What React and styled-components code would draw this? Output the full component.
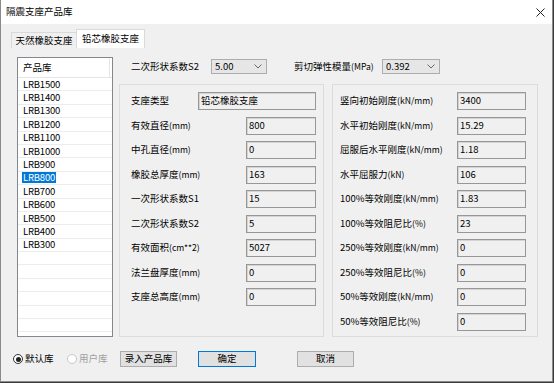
import React from 'react'
import styled, { createGlobalStyle } from 'styled-components'

const products = ['LRB1500', 'LRB1400', 'LRB1300', 'LRB1200', 'LRB1100', 'LRB1000', 'LRB900', 'LRB800', 'LRB700', 'LRB600', 'LRB500', 'LRB400', 'LRB300']

const leftFields = [
  ['有效直径(mm)', '800'],
  ['中孔直径(mm)', '0'],
  ['橡胶总厚度(mm)', '163'],
  ['一次形状系数S1', '15'],
  ['二次形状系数S2', '5'],
  ['有效面积(cm**2)', '5027'],
  ['法兰盘厚度(mm)', '0'],
  ['支座总高度(mm)', '0'],
]

const rightFields = [
  ['竖向初始刚度(kN/mm)', '3400'],
  ['水平初始刚度(kN/mm)', '15.29'],
  ['屈服后水平刚度(kN/mm)', '1.18'],
  ['水平屈服力(kN)', '106'],
  ['100%等效刚度(kN/mm)', '1.83'],
  ['100%等效阻尼比(%)', '23'],
  ['250%等效刚度(kN/mm)', '0'],
  ['250%等效阻尼比(%)', '0'],
  ['50%等效刚度(kN/mm)', '0'],
  ['50%等效阻尼比(%)', '0'],
]

const Chevron = () => (
  <svg width="8" height="5" viewBox="0 0 8 5">
    <polyline points="0.5,0.5 4,4 7.5,0.5" fill="none" stroke="#6a6a6a" strokeWidth="1" />
  </svg>
)

// split "label(unit)" so the unit can be drawn a little narrower
const Label = ({ text }) => {
  const i = text.indexOf('(')
  if (i < 0) return <span>{text}</span>
  return (
    <span>
      {text.slice(0, i)}
      <Unit>{text.slice(i)}</Unit>
    </span>
  )
}

const App = () => {
  const emptyRows = Array.from({ length: 7 })

  return (
    <>
      <GlobalStyle />
      <Window>
        <TitleBar>
          <span>隔震支座产品库</span>
          <svg width="9" height="9" viewBox="0 0 9 9">
            <path d="M0.5 0.5 L8.5 8.5 M8.5 0.5 L0.5 8.5" stroke="#222" strokeWidth="1" />
          </svg>
        </TitleBar>

        <TabStrip>
          <Tab width={65}>天然橡胶支座</Tab>
          <Tab width={69} active>铅芯橡胶支座</Tab>
        </TabStrip>

        <Page>
          <ProductList>
            <ListHeader>
              <HeaderCell>产品库</HeaderCell>
            </ListHeader>
            {products.map((p) => (
              <ListRow key={p}>
                <ItemText selected={p === 'LRB800'}>{p}</ItemText>
              </ListRow>
            ))}
            {emptyRows.map((_, i) => (
              <ListRow key={'e' + i} />
            ))}
          </ProductList>

          <RightColumn>
            <TopRow>
              <ComboLabel width={80}>二次形状系数S2</ComboLabel>
              <Combo width={56}>
                <span>5.00</span>
                <Chevron />
              </Combo>
              <ComboLabel width={88} gap={27}>
                <Label text="剪切弹性模量(MPa)" />
              </ComboLabel>
              <Combo width={58}>
                <span>0.392</span>
                <Chevron />
              </Combo>
            </TopRow>

            <Groups>
              <Group width={205} padLeft={11} padRight={7}>
                <FieldRow>
                  <span>支座类型</span>
                  <ValueBox width={118}>铅芯橡胶支座</ValueBox>
                </FieldRow>
                {leftFields.map(([label, value]) => (
                  <FieldRow key={label}>
                    <Label text={label} />
                    <ValueBox width={70}>{value}</ValueBox>
                  </FieldRow>
                ))}
              </Group>
              <Group width={206} padLeft={7} padRight={11}>
                {rightFields.map(([label, value]) => (
                  <FieldRow key={label}>
                    <Label text={label} />
                    <ValueBox width={69}>{value}</ValueBox>
                  </FieldRow>
                ))}
              </Group>
            </Groups>
          </RightColumn>
        </Page>

        <BottomBar>
          <Radio width={54}>
            <RadioCircle checked />
            <span>默认库</span>
          </Radio>
          <Radio width={53} disabled>
            <RadioCircle disabled />
            <span>用户库</span>
          </Radio>
          <Button width={57}>录入产品库</Button>
          <Button width={58} gap={21} primary>确定</Button>
          <Button width={57} gap={41}>取消</Button>
        </BottomBar>
      </Window>
    </>
  )
}

const GlobalStyle = createGlobalStyle`
  * { box-sizing: border-box; }
  html, body {
    margin: 0;
    padding: 0;
    background: #3b3b3b;
  }
  body {
    font-family: "Noto Sans CJK SC", "Noto Sans", sans-serif;
    font-size: 9.5px;
    color: #000;
  }
`

const Window = styled.div`
  width: 553px;
  height: 382px;
  background: #f0f0f0;
  border: 1px solid #8a8a8a;
  border-top: none;
  display: flex;
  flex-direction: column;
`

const TitleBar = styled.div`
  height: 24px;
  background: #fff;
  display: flex;
  align-items: center;
  justify-content: space-between;
  padding: 0 7px 0 5px;
  line-height: 1;
`

const TabStrip = styled.div`
  height: 24px;
  display: flex;
  align-items: flex-end;
  padding-left: 10px;
`

const Tab = styled.div`
  width: ${(p) => p.width}px;
  height: ${(p) => (p.active ? 19 : 16)}px;
  background: ${(p) => (p.active ? '#fff' : '#f0f0f0')};
  border: 1px solid #d9d9d9;
  border-bottom: none;
  ${(p) => (p.active ? '' : 'border-right: none;')}
  display: flex;
  align-items: center;
  justify-content: center;
  line-height: 1;
`

const Page = styled.div`
  display: flex;
  gap: 6px;
  padding: 9px 0 0 16px;
`

const ProductList = styled.div`
  width: 96px;
  height: 280px;
  background: #fff;
  border: 1px solid #828790;
  overflow: hidden;
`

const ListHeader = styled.div`
  height: 20px;
  border-bottom: 1px solid #e5e5e5;
  display: flex;
`

const HeaderCell = styled.div`
  width: 92px;
  height: 100%;
  border-right: 1px solid #e5e5e5;
  display: flex;
  align-items: center;
  padding-left: 5px;
  line-height: 1;
`

const ListRow = styled.div`
  height: 13.4px;
  border-bottom: 1px solid #ececec;
  display: flex;
  align-items: center;
  padding-left: 4px;
`

const ItemText = styled.span`
  display: inline-block;
  line-height: 11px;
  padding: 0 1px;
  letter-spacing: -0.2px;
  background: ${(p) => (p.selected ? '#0078d7' : 'transparent')};
  color: ${(p) => (p.selected ? '#fff' : '#000')};
`

const RightColumn = styled.div`
  width: 419px;
  display: flex;
  flex-direction: column;
`

const TopRow = styled.div`
  height: 19px;
  display: flex;
  align-items: center;
  padding-left: 12px;
  margin-bottom: 8px;
`

const ComboLabel = styled.span`
  width: ${(p) => p.width}px;
  margin-left: ${(p) => p.gap || 0}px;
  white-space: nowrap;
  line-height: 1;
`

const Unit = styled.span`
  font-size: 8.6px;
`

const Combo = styled.div`
  width: ${(p) => p.width}px;
  height: 15px;
  background: #e6e6e6;
  border: 1px solid #adadad;
  display: flex;
  align-items: center;
  justify-content: space-between;
  padding: 0 4px 0 3px;
  line-height: 1;
`

const Groups = styled.div`
  height: 253px;
  display: flex;
  gap: 8px;
`

const Group = styled.div`
  width: ${(p) => p.width}px;
  border: 1px solid #dcdcdc;
  padding: 7px ${(p) => p.padRight}px 0 ${(p) => p.padLeft}px;
  display: flex;
  flex-direction: column;
  gap: 6.5px;
`

const FieldRow = styled.div`
  height: 18px;
  display: flex;
  align-items: center;
  justify-content: space-between;
  white-space: nowrap;
  line-height: 1;
`

const ValueBox = styled.div`
  width: ${(p) => p.width}px;
  height: 18px;
  background: #f0f0f0;
  border: 1px solid #979797;
  box-shadow: inset 1px 1px 0 #d4d4d4;
  display: flex;
  align-items: center;
  padding-left: 2px;
`

const BottomBar = styled.div`
  height: 16px;
  margin-top: 14px;
  display: flex;
  align-items: center;
  padding-left: 12px;
`

const Radio = styled.div`
  width: ${(p) => p.width}px;
  display: flex;
  align-items: center;
  gap: 2px;
  color: ${(p) => (p.disabled ? '#a0a0a0' : '#000')};
  line-height: 1;
`

const RadioCircle = styled.span`
  width: 10px;
  height: 10px;
  border-radius: 50%;
  border: 1px solid ${(p) => (p.disabled ? '#c6c6c6' : '#333')};
  background: #fff;
  display: flex;
  align-items: center;
  justify-content: center;
  &::after {
    content: '';
    width: 5px;
    height: 5px;
    border-radius: 50%;
    background: ${(p) => (p.checked ? '#222' : 'transparent')};
  }
`

const Button = styled.div`
  width: ${(p) => p.width}px;
  height: 16px;
  margin-left: ${(p) => p.gap || 0}px;
  background: #e1e1e1;
  border: 1px solid ${(p) => (p.primary ? '#0078d7' : '#adadad')};
  display: flex;
  align-items: center;
  justify-content: center;
  line-height: 1;
`

export default App
